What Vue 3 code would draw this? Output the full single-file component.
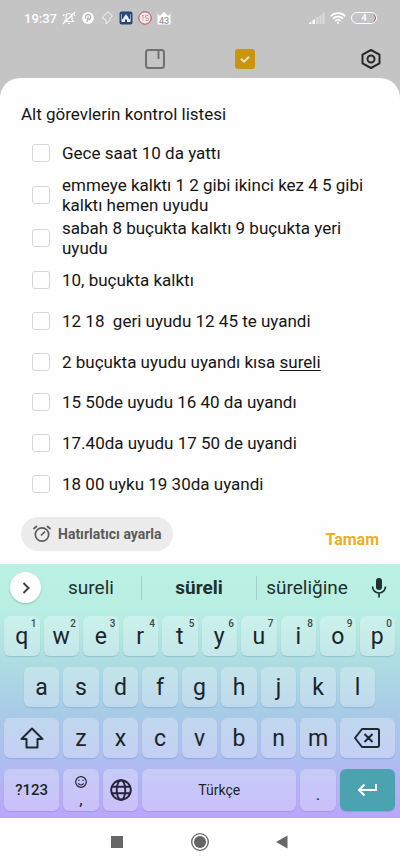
<script setup>
import { ref } from 'vue'

const tasks = ref([
  { text: 'Gece saat 10 da yattı', done: false },
  { text: 'emmeye kalktı 1 2 gibi ikinci kez 4 5 gibi kalktı hemen uyudu', done: false, long: true },
  { text: 'sabah 8 buçukta kalktı 9 buçukta yeri uyudu', done: false, long: true },
  { text: '10, buçukta kalktı', done: false },
  { text: '12 18  geri uyudu 12 45 te uyandi', done: false },
  { text: '2 buçukta uyudu uyandı kısa ', composing: 'sureli', done: false },
  { text: '15 50de uyudu 16 40 da uyandı', done: false },
  { text: '17.40da uyudu 17 50 de uyandi', done: false },
  { text: '18 00 uyku 19 30da uyandi', done: false },
])

const topKeys = 'qwertyuiop'.split('').map((letter, i) => ({ letter, digit: (i + 1) % 10 }))
const homeKeys = 'asdfghjkl'.split('')
const bottomKeys = 'zxcvbnm'.split('')
</script>

<template>
  <div class="screen">
    <header class="top">
      <div class="status">
        <span class="clock">19:37</span>
        <svg class="s-icon" viewBox="0 0 14 14" fill="none" stroke="#fff" stroke-width="1.2">
          <path d="M2.500 10.500h9L10 8.500V5.500a3 3 0 0 0-6 0v3zM6 12.300h2M1 13 13 1M1.300 5l1-2M12.700 5l-.6-1.500" />
        </svg>
        <svg class="s-icon" viewBox="0 0 14 14">
          <circle cx="7" cy="7" r="5.900" fill="#fff" />
          <path d="M4.900 7.700C3.500 5.300 5 3.500 7.200 3.500c2.400 0 3.100 2.200 2.200 3.900-.7 1.400-2.200 1.300-2.600.5M7.300 5.500 5.900 11.200" fill="none" stroke="#b4b4b4" stroke-width="1.300" />
        </svg>
        <svg class="s-icon" viewBox="0 0 14 14" fill="none" stroke="#f4f4f4" stroke-width="1">
          <path d="M8 .8 12.500 5 9.800 7.500v2L6 13V9.300L2 6.700z" />
        </svg>
        <svg class="s-icon" viewBox="0 0 14 14">
          <rect x=".5" y=".5" width="13" height="13" rx="2" fill="#274779" />
          <path d="M2.500 3v7.500h9V3" fill="none" stroke="#8fa9cf" stroke-width="1" />
          <path d="M7 3c.5 1.500 2.500 2.300 2.500 4.300L11 8.500v2.500H3V8.500l1.500-1.200C4.500 5.300 6.500 4.500 7 3z" fill="#e9f0f8" />
          <path d="M6 11V9.200a1 1 0 0 1 2 0V11z" fill="#274779" />
        </svg>
        <svg class="s-icon" viewBox="0 0 14 14">
          <circle cx="7" cy="7" r="6.200" fill="#f6e9ea" stroke="#b8475a" stroke-width="1" />
          <path d="M4 4.500h2M5 4.500v5M7.500 4.500h3M7.500 7h2.700v2.500H7.500M7.500 4.500V7" fill="none" stroke="#d99aa4" stroke-width="1" />
        </svg>
        <svg class="s-icon" viewBox="0 0 14 14">
          <path d="M.5 1v12.500h13V1L12.500 4 11 5 7 .8 3 5 1.500 4z" fill="#fff" />
          <text x="7" y="12.500" text-anchor="middle" class="badge-num">43</text>
        </svg>
        <span class="spacer"></span>
        <svg class="signal" viewBox="0 0 16 12" fill="#fff">
          <path d="M0 12v-1l2.500-1.500V12zM3.500 12V8.500L6 7v5z" />
          <path d="M7.200 12V6L9.400 4.500V12zM10.400 12V4l2.100-1.600V12zM13.500 12V1.800L15.600 0v12z" opacity=".4" />
        </svg>
        <svg class="wifi" viewBox="0 0 16 12" fill="none" stroke="#fff" stroke-width="1.700">
          <path d="M.7 4.200a10.300 10.300 0 0 1 14.600 0M3 6.700a7 7 0 0 1 10 0M5.300 9a3.800 3.800 0 0 1 5.400 0" />
          <circle cx="8" cy="10.800" r="1" fill="#fff" stroke="none" />
        </svg>
        <span class="battery">4</span>
      </div>
      <nav class="tabs">
        <button class="tab" aria-label="Notlar">
          <svg viewBox="0 0 20 20" fill="none" stroke="#707070" stroke-width="2">
            <rect x="1" y="1" width="18" height="18" rx="2.500" />
            <path d="M13.500 1v9" />
          </svg>
        </button>
        <button class="tab" aria-label="Görevler">
          <svg viewBox="0 0 20 20">
            <rect width="20" height="20" rx="3" fill="#cb940e" />
            <path d="m6 9.700 3 3 5-5" fill="none" stroke="#e8dfc8" stroke-width="2" />
          </svg>
        </button>
        <button class="tab settings" aria-label="Ayarlar">
          <svg viewBox="0 0 20 20" fill="none" stroke="#292929" stroke-width="2">
            <path d="m10 1 8.500 4.700v8.600L10 19l-8.500-4.700V5.700z" stroke-linejoin="round" />
            <circle cx="10" cy="10" r="3.500" />
          </svg>
        </button>
      </nav>
    </header>

    <main class="sheet">
      <h1 class="title">Alt görevlerin kontrol listesi</h1>
      <ul class="tasks">
        <li v-for="(task, i) in tasks" :key="i" class="task" :class="{ long: task.long }">
          <input :id="'task-' + i" v-model="task.done" type="checkbox" class="box" />
          <label :for="'task-' + i" class="label">{{ task.text }}<u v-if="task.composing">{{ task.composing }}</u></label>
        </li>
      </ul>
      <div class="actions">
        <button class="reminder">
          <svg viewBox="0 0 18 18" fill="none" stroke="#5a5a5a" stroke-width="1.700" stroke-linecap="round">
            <circle cx="9" cy="9.500" r="6.700" />
            <path d="m8.500 10 3-3M1 3.500 3.500 1.500M17 3.500l-2.500-2" />
          </svg>
          Hatırlatıcı ayarla
        </button>
        <button class="confirm">Tamam</button>
      </div>
    </main>

    <section class="keyboard">
      <div class="suggestions">
        <button class="expand" aria-label="Genişlet">
          <svg viewBox="0 0 12 12" fill="none" stroke="#444" stroke-width="2"><path d="m3.500 1 5 5-5 5" /></svg>
        </button>
        <button class="word">sureli</button>
        <button class="word best">süreli</button>
        <button class="word">süreliğine</button>
        <button class="mic" aria-label="Sesle yazma">
          <svg viewBox="0 0 16 20">
            <rect x="5" y="0" width="6" height="12" rx="3" fill="#20302f" />
            <path d="M1.500 8.500a6.500 6.500 0 0 0 13 0M8 15v4.500" fill="none" stroke="#20302f" stroke-width="1.700" />
          </svg>
        </button>
      </div>
      <div class="keys">
        <button v-for="key in topKeys" :key="key.letter" class="key">{{ key.letter }}<sup class="digit">{{ key.digit }}</sup></button>
        <button v-for="(letter, i) in homeKeys" :key="letter" class="key" :class="{ indent: i === 0 }">{{ letter }}</button>
        <button class="key wide first" aria-label="Shift">
          <svg class="shift" viewBox="0 0 24 22" fill="none" stroke="#1c2a30" stroke-width="2" stroke-linejoin="round">
            <path d="M12 1.500 1.500 12H6.500v8.500h11V12h5z" />
          </svg>
        </button>
        <button v-for="letter in bottomKeys" :key="letter" class="key">{{ letter }}</button>
        <button class="key wide" aria-label="Sil">
          <svg class="erase" viewBox="0 0 26 20" fill="none" stroke="#1c2a30" stroke-width="2" stroke-linejoin="round">
            <path d="M8 1h15.500a1.500 1.500 0 0 1 1.500 1.500v15a1.500 1.500 0 0 1-1.500 1.500H8L1 10zM10.500 6l8 8M18.500 6l-8 8" />
          </svg>
        </button>
        <button class="key wide first tall symbols">?123</button>
        <button class="key tall comma">
          <svg viewBox="0 0 14 14" fill="none" stroke="#25233a" stroke-width="1.200">
            <circle cx="7" cy="7" r="5.300" />
            <path d="M4.300 8.300a3 3 0 0 0 5.400 0" />
            <path d="M5 4.800v1.300M9 4.800v1.300" />
          </svg>
          <span>,</span>
        </button>
        <button class="key tall" aria-label="Dil">
          <svg class="globe" viewBox="0 0 22 22" fill="none" stroke="#25233a" stroke-width="1.900">
            <circle cx="11" cy="11" r="9.800" />
            <ellipse cx="11" cy="11" rx="4.300" ry="9.800" />
            <path d="M2 7.700h18M2 14.300h18" />
          </svg>
        </button>
        <button class="key tall space">Türkçe</button>
        <button class="key tall dot">.</button>
        <button class="key tall wide enter" aria-label="Enter">
          <svg viewBox="0 0 20 14" fill="none" stroke="#fff" stroke-width="2"><path d="M19 1v6H2M7.500 1.500 2 7l5.500 5.500" /></svg>
        </button>
      </div>
    </section>

    <nav class="system">
      <button aria-label="Son uygulamalar"><svg viewBox="0 0 18 18"><path d="M3 3h12v12H3z" fill="#666" /></svg></button>
      <button aria-label="Ana ekran">
        <svg viewBox="0 0 18 18">
          <circle cx="9" cy="9" r="8.300" fill="none" stroke="#666" stroke-width="1.300" />
          <circle cx="9" cy="9" r="6" fill="#666" />
        </svg>
      </button>
      <button aria-label="Geri"><svg viewBox="0 0 18 18"><path d="M13.500 2.500v13L2 9z" fill="#666" /></svg></button>
    </nav>
  </div>
</template>

<style>
body {
  margin: 0;
  background: #fff;
}
</style>

<style scoped>
.screen {
  display: flex;
  flex-direction: column;
  min-height: 100vh;
  background: #c4c4c4;
  font-family: Roboto, "Noto Sans", sans-serif;
  color: #151515;
}
button {
  display: flex;
  align-items: center;
  justify-content: center;
  margin: 0;
  padding: 0;
  border: 0;
  background: none;
  color: inherit;
  font: inherit;
}
svg {
  display: block;
}
.top {
  height: 78px;
}
.status {
  display: flex;
  align-items: center;
  height: 36px;
  padding: 0 23px 0 24px;
  color: #fff;
}
.clock {
  width: 38px;
  font-size: 13px;
  font-weight: 500;
  white-space: nowrap;
}
.s-icon {
  flex: none;
  width: 14px;
  height: 14px;
  margin-right: 5px;
}
.badge-num {
  font-size: 9px;
  font-weight: 500;
  fill: #9a9a9a;
}
.spacer {
  flex: 1;
}
.signal,
.wifi {
  width: 16px;
  height: 12px;
  margin-right: 5px;
}
.battery {
  box-sizing: border-box;
  width: 26px;
  height: 12px;
  border: 1px solid #fff;
  border-radius: 6px;
  box-shadow: inset -2px 0 0 -1px #c43a50;
  font-size: 9px;
  font-weight: 700;
  line-height: 10px;
  text-align: center;
}
.tabs {
  display: grid;
  grid-template-columns: 1fr 20px 70px 20px 1fr;
  align-items: center;
  height: 46px;
}
.tab:nth-child(1) {
  grid-column: 2;
}
.tab:nth-child(2) {
  grid-column: 4;
}
.settings {
  grid-column: 5;
  justify-self: end;
  margin-right: 19px;
}
.tab svg {
  width: 20px;
  height: 20px;
}
.sheet {
  display: flex;
  flex: 1;
  flex-direction: column;
  padding: 26px 21px 13px;
  border-radius: 20px 20px 0 0;
  background: #fefefe;
}
.title {
  margin: 0 0 9px;
  font-size: 17px;
  font-weight: 400;
  line-height: 20px;
}
.tasks {
  display: flex;
  flex: 1;
  flex-direction: column;
  margin: 0;
  padding: 0 10px 0 11px;
  list-style: none;
}
.task {
  display: flex;
  flex: 1;
  align-items: center;
  gap: 12px;
}
.task.long {
  flex: none;
  height: 43px;
}
.box {
  appearance: none;
  box-sizing: border-box;
  flex: none;
  width: 18px;
  height: 18px;
  margin: 0;
  border: 1px solid #d6d6d6;
  border-radius: 3px;
  background: #fff;
}
.box:checked {
  background: #e9ae1d;
}
.label {
  font-size: 17px;
  line-height: 20px;
  white-space: pre-wrap;
}
.label u {
  text-decoration-thickness: 1px;
  text-underline-offset: 2px;
}
.actions {
  display: flex;
  justify-content: space-between;
  margin-top: 13px;
}
.reminder {
  gap: 7px;
  height: 34px;
  padding: 0 11px 0 12px;
  border-radius: 17px;
  background: #ececec;
  color: #5a5a5a;
  font-size: 14px;
  font-weight: 700;
}
.reminder svg {
  width: 18px;
  height: 18px;
}
.confirm {
  align-self: flex-end;
  height: 24px;
  color: #ebae24;
  font-size: 16px;
  font-weight: 700;
}
.keyboard {
  background: linear-gradient(#bbf1e3 0%, #b8efe2 18%, #afdfe2 36%, #a8cce6 57%, #afbdf0 77%, #b9a6fb 100%);
}
.suggestions {
  display: grid;
  grid-template-columns: 31px 100px 116px 1fr 30px;
  align-items: center;
  height: 47px;
  padding: 0 13px 0 10px;
}
.expand {
  width: 31px;
  height: 31px;
  border-radius: 50%;
  background: #fff;
  box-shadow: 0 1px 2px rgba(40, 90, 80, 0.3);
}
.expand svg {
  width: 12px;
  height: 12px;
}
.word {
  height: 24px;
  color: #20302f;
  font-size: 19px;
}
.best {
  border-right: 1px solid #9fd2c8;
  border-left: 1px solid #9fd2c8;
  font-weight: 700;
}
.mic {
  justify-self: end;
}
.mic svg {
  width: 16px;
  height: 20px;
}
.keys {
  display: grid;
  grid-template-columns: repeat(20, 1fr);
  gap: 11px 4px;
  padding: 5px 5px 7px 4px;
}
.key {
  position: relative;
  grid-column: span 2;
  height: 40px;
  border-radius: 6px;
  background: rgba(255, 255, 255, 0.27);
  box-shadow: 0 1px 1px rgba(60, 80, 120, 0.2);
  color: #1a2529;
  font-size: 23px;
}
.indent {
  grid-column: 2 / span 2;
}
.wide {
  grid-column: span 3;
}
.first {
  grid-column: 1 / span 3;
}
.tall {
  height: 42px;
}
.digit {
  position: absolute;
  top: 2px;
  right: 3px;
  color: #3a4a4c;
  font-size: 10px;
  font-weight: 500;
  line-height: 12px;
}
.shift {
  width: 24px;
  height: 22px;
}
.erase {
  width: 26px;
  height: 20px;
}
.symbols {
  font-size: 15px;
  font-weight: 500;
}
.comma {
  flex-direction: column;
  padding-top: 4px;
  font-size: 17px;
  line-height: 20px;
}
.comma svg {
  width: 14px;
  height: 14px;
}
.globe {
  width: 22px;
  height: 22px;
}
.space {
  grid-column: span 8;
  font-size: 14px;
}
.dot {
  padding-top: 8px;
  font-size: 17px;
}
.enter {
  background: #4ba3af;
}
.enter svg {
  width: 20px;
  height: 14px;
}
.system {
  display: grid;
  grid-template-columns: repeat(3, 83px);
  align-items: center;
  justify-content: center;
  height: 48px;
  background: #fff;
}
.system svg {
  width: 18px;
  height: 18px;
}
</style>
